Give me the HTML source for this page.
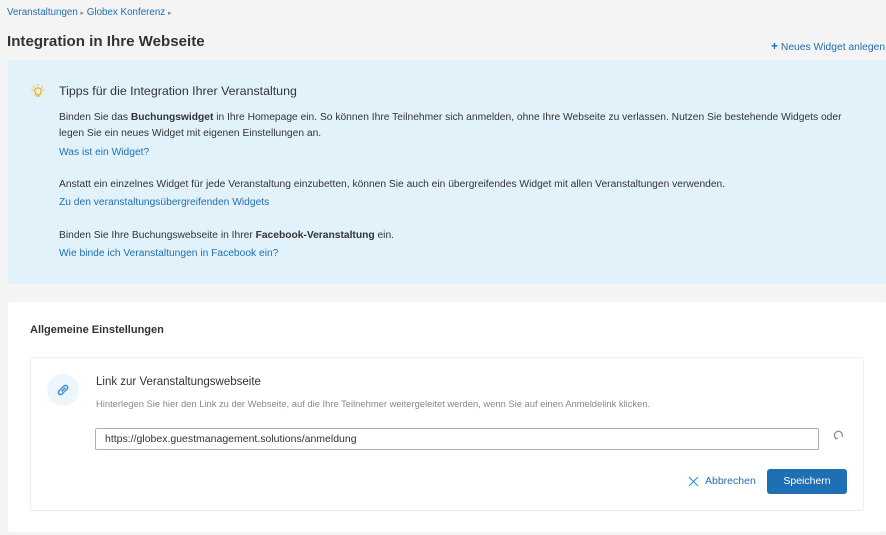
<!DOCTYPE html>
<html><head><meta charset="utf-8"><style>
*{margin:0;padding:0;box-sizing:border-box}
body{width:886px;height:535px;background:#f4f4f4;font-family:"Liberation Sans",sans-serif;color:#333;position:relative;overflow:hidden}
.a{position:absolute;white-space:nowrap}
.p{font-size:10.25px;color:#333}
.lnk{color:#1f6fb5}
</style></head><body>
<div class="a lnk" style="left:7px;top:7px;font-size:9.8px">Veranstaltungen <span style="color:#888;font-size:7px">▸</span> Globex Konferenz <span style="color:#888;font-size:7px">▸</span></div>
<div class="a" style="left:7px;top:33px;font-size:15.1px;font-weight:bold;color:#333">Integration in Ihre Webseite</div>
<div class="a lnk" style="left:771px;top:39px;font-size:10.3px"><b style="font-size:12px">+</b> Neues Widget anlegen</div>
<div class="a" style="left:8px;top:60px;width:878px;height:224px;background:#e2f2fb"></div>
<svg class="a" style="left:31px;top:83px" width="14" height="16" viewBox="0 0 14 16"><path d="M4.5 9.5C3 8.5 3 5 7 5s4 3.5 2.5 4.5v2h-5z" fill="none" stroke="#f0b429" stroke-width="1.3"/><path d="M5 13h4" stroke="#f0b429" stroke-width="1.3"/><path d="M7 1v2M2 3l1.3 1.3M12 3l-1.3 1.3M0.5 7h1.5M12 7h1.5" stroke="#f0b429" stroke-width="1"/></svg>
<div class="a" style="left:59px;top:84px;font-size:12.4px;color:#333">Tipps für die Integration Ihrer Veranstaltung</div>
<div class="a p" style="left:59px;top:112px">Binden Sie das <b>Buchungswidget</b> in Ihre Homepage ein. So können Ihre Teilnehmer sich anmelden, ohne Ihre Webseite zu verlassen. Nutzen Sie bestehende Widgets oder</div>
<div class="a p" style="left:59px;top:128px">legen Sie ein neues Widget mit eigenen Einstellungen an.</div>
<div class="a p lnk" style="left:59px;top:147px">Was ist ein Widget?</div>
<div class="a p" style="left:59px;top:179px">Anstatt ein einzelnes Widget für jede Veranstaltung einzubetten, können Sie auch ein übergreifendes Widget mit allen Veranstaltungen verwenden.</div>
<div class="a p lnk" style="left:59px;top:197px">Zu den veranstaltungsübergreifenden Widgets</div>
<div class="a p" style="left:59px;top:230px">Binden Sie Ihre Buchungswebseite in Ihrer <b>Facebook-Veranstaltung</b> ein.</div>
<div class="a p lnk" style="left:59px;top:248px">Wie binde ich Veranstaltungen in Facebook ein?</div>
<div class="a" style="left:8px;top:302px;width:878px;height:230px;background:#fff;border-radius:3px"></div>
<div class="a" style="left:30px;top:324px;font-size:11px;font-weight:bold;color:#333">Allgemeine Einstellungen</div>
<div class="a" style="left:30px;top:357px;width:834px;height:154px;border:1px solid #eceff2;border-radius:3px"></div>
<div class="a" style="left:47px;top:374px;width:32px;height:32px;border-radius:50%;background:#eef6fd"></div>
<svg class="a" style="left:56px;top:383px" width="14" height="14" viewBox="0 0 14 14"><path d="M6 8l3-3M5 6l-2 2a2 2 0 003 3l2-2M9 8l2-2a2 2 0 00-3-3L6 5" fill="none" stroke="#3b8fd6" stroke-width="1.5" stroke-linecap="round"/></svg>
<div class="a" style="left:96px;top:376px;font-size:11.5px;color:#333">Link zur Veranstaltungswebseite</div>
<div class="a" style="left:96px;top:398px;font-size:9.4px;color:#888">Hinterlegen Sie hier den Link zu der Webseite, auf die Ihre Teilnehmer weitergeleitet werden, wenn Sie auf einen Anmeldelink klicken.</div>
<div class="a" style="left:95px;top:428px;width:724px;height:22px;border:1px solid #aab0b6;border-radius:2px;background:#fff"></div>
<div class="a" style="left:105px;top:433px;font-size:10.5px;color:#333">https://globex.guestmanagement.solutions/anmeldung</div>
<svg class="a" style="left:833px;top:430px" width="11" height="11" viewBox="0 0 11 11"><path d="M3 8.5A4 4 0 1 1 9 7" fill="none" stroke="#888" stroke-width="1.2"/><path d="M2 7l1 2 2-1" fill="none" stroke="#888" stroke-width="1"/></svg>
<svg class="a" style="left:688px;top:476px" width="11" height="11" viewBox="0 0 11 11"><path d="M1 1l9 9M10 1l-9 9" stroke="#3b8fd6" stroke-width="1.2"/></svg>
<div class="a lnk" style="left:705px;top:475px;font-size:10.5px">Abbrechen</div>
<div class="a" style="left:767px;top:469px;width:80px;height:25px;background:#1f6fb5;border-radius:3px;color:#fff;font-size:10.5px;text-align:center;line-height:25px">Speichern</div>
</body></html>
